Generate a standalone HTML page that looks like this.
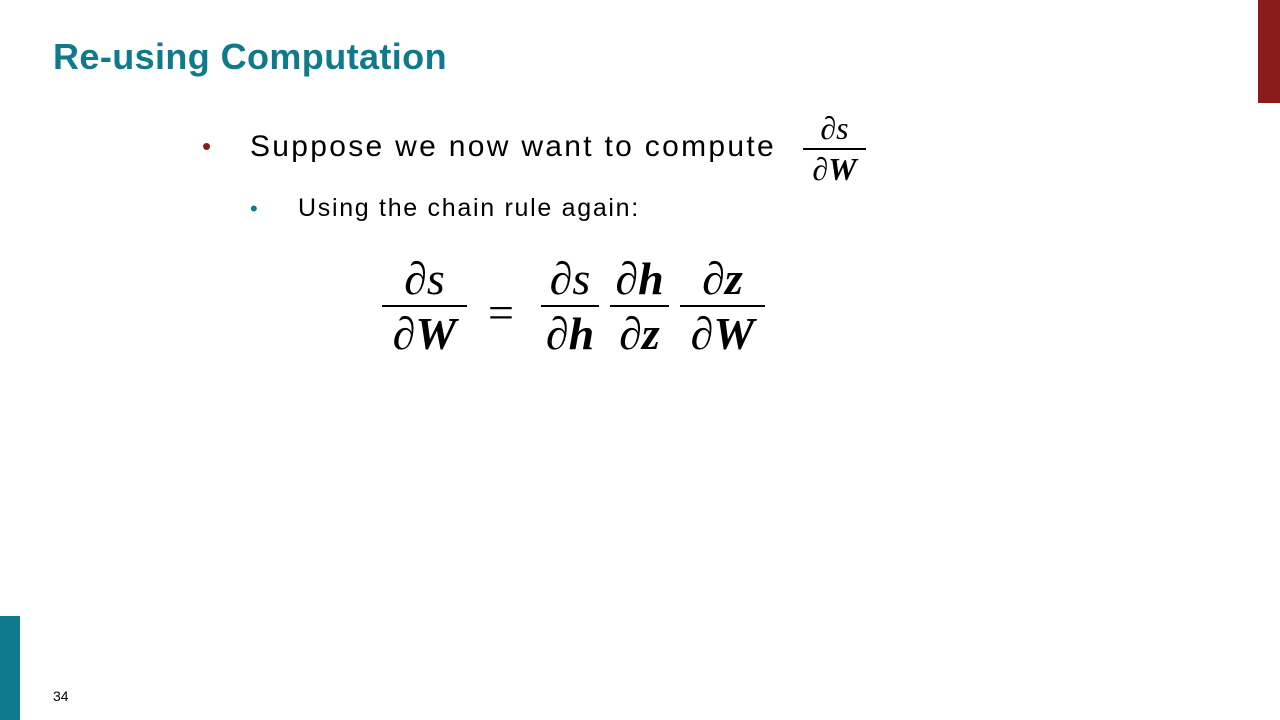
<!DOCTYPE html>
<html><head><meta charset="utf-8"><style>
body{margin:0;width:1280px;height:720px;position:relative;background:#fff;overflow:hidden;font-family:"Liberation Sans",sans-serif;}
.a{position:absolute;white-space:nowrap;}
.m{font-family:"Liberation Serif",serif;font-style:italic;color:#000;}
.b{font-weight:bold;}
.fr{position:absolute;text-align:center;}
.fr .n,.fr .d{display:block;line-height:1;}
.fr .l{display:block;height:2px;background:#000;}
</style></head><body>
<div class="a" style="left:1258px;top:0;width:22px;height:103px;background:#8b1a1a"></div>
<div class="a" style="left:0;top:616px;width:20px;height:104px;background:#0e7a8c"></div>
<div class="a" style="left:53px;top:36px;font-size:36px;font-weight:bold;color:#0e7a8c;letter-spacing:0.4px">Re-using Computation</div>
<div class="a" style="left:202px;top:131px;font-size:26px;color:#8b1a1a">•</div>
<div class="a" style="left:250px;top:130px;font-size:30px;color:#000;letter-spacing:2.3px">Suppose we now want to compute</div>
<div class="a" style="left:250px;top:196px;font-size:22px;color:#0e7a8c">•</div>
<div class="a" style="left:298px;top:194px;font-size:25px;color:#000;letter-spacing:1.7px">Using the chain rule again:</div>

<div class="fr m" style="left:803px;top:112px;width:63px;font-size:32px">
<span class="n">∂s</span><span class="l" style="margin:4px 0 3px"></span><span class="d">∂<span class="b">W</span></span></div>

<div class="fr m" style="left:382px;top:256px;width:85px;font-size:46px">
<span class="n">∂s</span><span class="l" style="margin:3px 0 4px"></span><span class="d">∂<span class="b">W</span></span></div>
<div class="a" style="left:488px;top:290px;font-family:'Liberation Serif',serif;font-size:46px;line-height:1">=</div>
<div class="fr m" style="left:541px;top:256px;width:58px;font-size:46px">
<span class="n">∂s</span><span class="l" style="margin:3px 0 4px"></span><span class="d">∂<span class="b">h</span></span></div>
<div class="fr m" style="left:610px;top:256px;width:59px;font-size:46px">
<span class="n">∂<span class="b">h</span></span><span class="l" style="margin:3px 0 4px"></span><span class="d">∂<span class="b">z</span></span></div>
<div class="fr m" style="left:680px;top:256px;width:85px;font-size:46px">
<span class="n">∂<span class="b">z</span></span><span class="l" style="margin:3px 0 4px"></span><span class="d">∂<span class="b">W</span></span></div>

<div class="a" style="left:53px;top:688px;font-size:14px;color:#000">34</div>
</body></html>
